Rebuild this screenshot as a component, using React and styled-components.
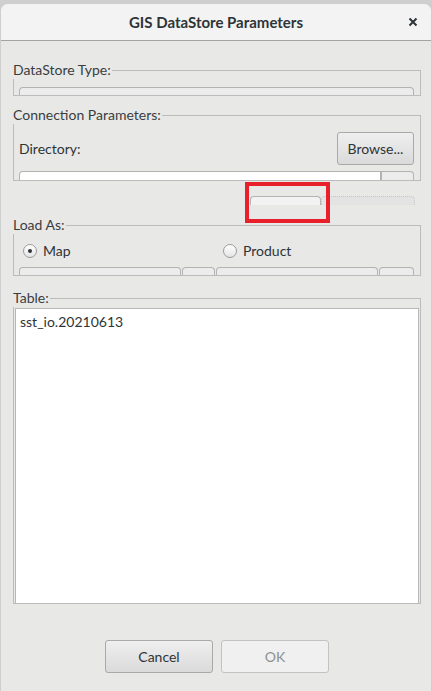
import React from 'react';
import styled, { createGlobalStyle } from 'styled-components';

const GlobalStyle = createGlobalStyle`
  html, body {
    margin: 0;
    padding: 0;
    background: #cfcfcf;
  }
  body {
    font-family: Lato, "Noto Sans", "Liberation Sans", sans-serif;
    font-size: 14px;
    color: #2e3436;
  }
`;

const Window = styled.div`
  margin: 4px 1px 0 1px;
  width: 430px;
  height: 687px;
  border-radius: 7px 7px 0 0;
  background: #e8e8e7;
  display: flex;
  flex-direction: column;
  overflow: hidden;
`;

const TitleBar = styled.div`
  position: relative;
  height: 36px;
  flex: none;
  display: flex;
  align-items: center;
  justify-content: center;
  background: #f3f3f3;
  border-bottom: 1px solid #a3a3a3;
  font-weight: bold;
  font-size: 15px;
  color: #2e3436;
`;

const CloseButton = styled.span`
  position: absolute;
  right: 13px;
  top: 13px;
  width: 10px;
  height: 10px;
  display: flex;
`;

const Content = styled.div`
  display: flex;
  flex-direction: column;
  padding: 20px 10px 0 12px;
`;

const Group = styled.fieldset`
  margin: 0;
  margin-top: ${({ $mt }) => $mt || 0}px;
  padding: 0 ${({ $pad }) => ($pad === undefined ? 6 : $pad)}px 0
    ${({ $pad }) => ($pad === undefined ? 5 : $pad)}px;
  border: 1px solid #bcbcbc;
  min-width: 0;
  overflow: hidden;
`;

const Legend = styled.legend`
  padding: 0 1px 0 0;
  margin-left: -${({ $pad }) => ($pad === undefined ? 5 : $pad) + 1}px;
  font-size: 14px;
  line-height: 18px;
  color: #3a3d3e;
  background: #e8e8e7;
`;

const Strip = styled.div`
  display: flex;
  gap: ${({ $gap }) => ($gap === undefined ? 1 : $gap)}px;
  margin-top: ${({ $mt }) => $mt || 0}px;
`;

const Seg = styled.div`
  box-sizing: border-box;
  height: ${({ $h }) => $h || 8}px;
  width: ${({ $w }) => ($w ? `${$w}px` : 'auto')};
  flex: ${({ $w }) => ($w ? 'none' : 1)};
  border: 1px ${({ $dotted }) => ($dotted ? 'dotted' : 'solid')}
    ${({ $dotted }) => ($dotted ? '#c6c6c6' : '#b3b3b3')};
  border-bottom: none;
  border-radius: ${({ $r }) => $r || '4px 4px 0 0'};
  background: ${({ $bg }) => $bg || '#ececec'};
`;

const Row = styled.div`
  display: flex;
  align-items: center;
  justify-content: space-between;
  margin-top: 8px;
`;

const Button = styled.button`
  box-sizing: border-box;
  width: ${({ $w }) => $w}px;
  height: 33px;
  padding: 0;
  border: 1px solid ${({ disabled }) => (disabled ? '#c2c2c2' : '#a9a9a9')};
  border-radius: 3px;
  background: ${({ disabled }) =>
    disabled ? '#f0f0f0' : 'linear-gradient(#efefef, #dadada)'};
  color: ${({ disabled }) => (disabled ? '#8d9091' : '#2e3436')};
  font-family: inherit;
  font-size: 14px;
`;

const TabRow = styled.div`
  position: relative;
  display: flex;
  margin-top: 15px;
  padding-left: 237px;
  padding-right: 6px;
`;

const Highlight = styled.div`
  position: absolute;
  left: 232px;
  top: -14px;
  width: 85px;
  height: 41px;
  box-sizing: border-box;
  border: 4px solid #e8202b;
  pointer-events: none;
`;

const RadioRow = styled.div`
  display: flex;
  height: 14px;
  margin-top: 10px;
  padding-left: 4px;
`;

const RadioLabel = styled.label`
  flex: none;
  display: flex;
  align-items: center;
  gap: 6px;
  width: 200px;
  line-height: 14px;
`;

const RadioCircle = styled.span`
  box-sizing: border-box;
  flex: none;
  width: 14px;
  height: 14px;
  border-radius: 50%;
  border: 1px solid #9c9c9c;
  background: linear-gradient(#ffffff, #e4e4e4);
  display: flex;
  align-items: center;
  justify-content: center;
  &::after {
    content: '';
    width: 4px;
    height: 4px;
    border-radius: 50%;
    background: ${({ $on }) => ($on ? '#2e3436' : 'transparent')};
  }
`;

const List = styled.div`
  box-sizing: border-box;
  height: 295px;
  margin-top: 1px;
  background: #ffffff;
  border: 1px solid #b8b8b8;
  border-bottom-width: 0;
  padding: 4px 4px;
  line-height: 18px;
`;

const Footer = styled.div`
  display: flex;
  justify-content: center;
  gap: 8px;
  margin-top: 36px;
`;

const App = () => (
  <>
    <GlobalStyle />
    <Window>
      <TitleBar>
        GIS DataStore Parameters
        <CloseButton>
          <svg width="10" height="10" viewBox="0 0 10 10">
            <path d="M1.5 1.5 L8.5 8.5 M8.5 1.5 L1.5 8.5" stroke="#2e3436" strokeWidth="2" />
          </svg>
        </CloseButton>
      </TitleBar>
      <Content>
        <Group>
          <Legend>DataStore Type:</Legend>
          <Strip $mt={8}>
            <Seg />
          </Strip>
        </Group>

        <Group $mt={10}>
          <Legend>Connection Parameters:</Legend>
          <Row>
            <span>Directory:</span>
            <Button $w={77}>Browse...</Button>
          </Row>
          <Strip $mt={6} $gap={0}>
            <Seg $h={9} $bg="#ffffff" $r="4px 0 0 0" />
            <Seg $h={9} $w={33} $r="0 4px 0 0" />
          </Strip>
        </Group>

        <TabRow>
          <Seg $h={9} $w={71} $bg="#f2f2f2" />
          <Seg $h={9} $bg="#e3e3e3" $dotted />
          <Highlight />
        </TabRow>

        <Group $mt={11}>
          <Legend>Load As:</Legend>
          <RadioRow>
            <RadioLabel>
              <RadioCircle $on />
              Map
            </RadioLabel>
            <RadioLabel>
              <RadioCircle />
              Product
            </RadioLabel>
          </RadioRow>
          <Strip $mt={9}>
            <Seg $w={162} />
            <Seg $w={33} />
            <Seg $w={162} />
            <Seg />
          </Strip>
        </Group>

        <Group $mt={13} $pad={1}>
          <Legend $pad={1}>Table:</Legend>
          <List>sst_io.20210613</List>
        </Group>

        <Footer>
          <Button $w={108}>Cancel</Button>
          <Button $w={108} disabled>OK</Button>
        </Footer>
      </Content>
    </Window>
  </>
);

export default App;
